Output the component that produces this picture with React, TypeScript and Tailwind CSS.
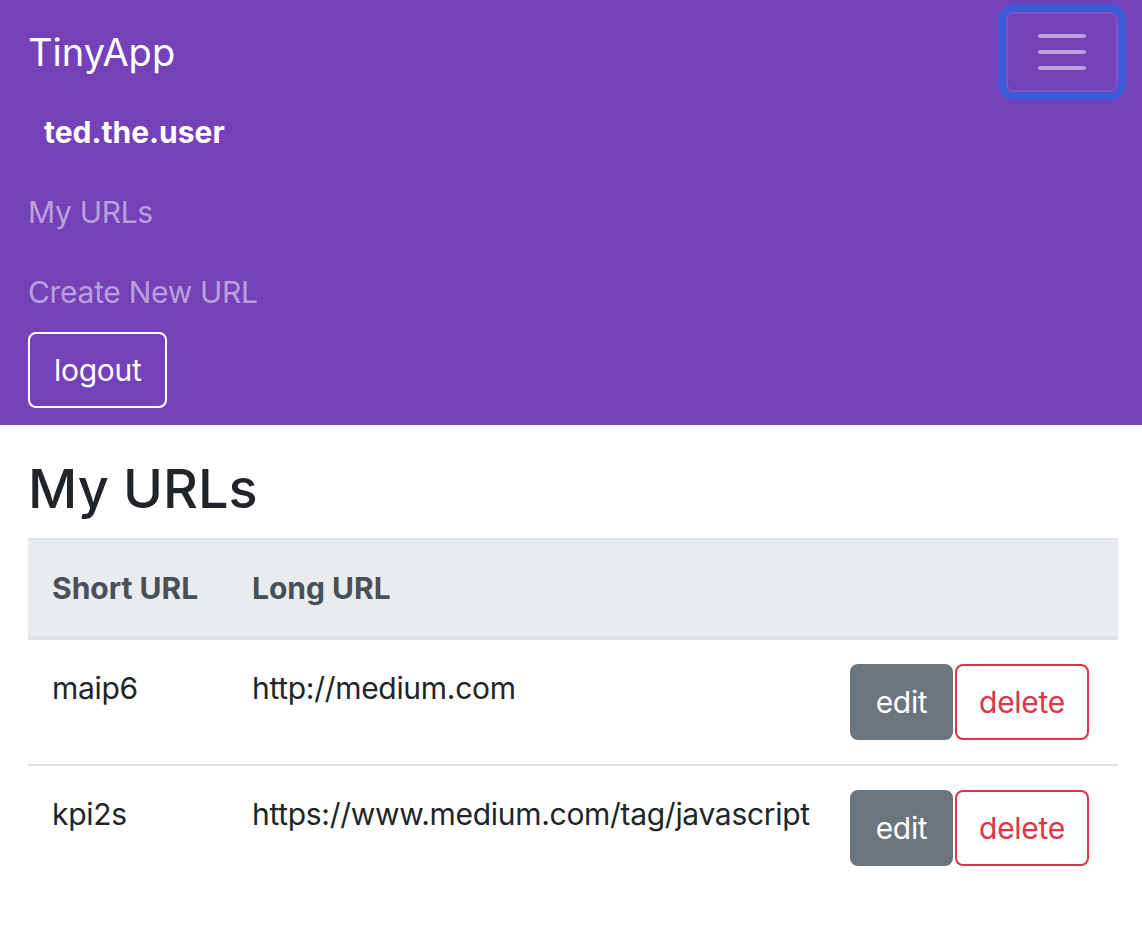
const urls = [
  { short: "maip6", long: "http://medium.com" },
  { short: "kpi2s", long: "https://www.medium.com/tag/javascript" },
];

function Hamburger() {
  return (
    <svg width="60" height="60" viewBox="0 0 30 30">
      <path
        d="M4 7h22M4 15h22M4 23h22"
        stroke="rgba(255,255,255,0.5)"
        strokeWidth={2}
        strokeLinecap="round"
      />
    </svg>
  );
}

export default function App() {
  return (
    <div className="min-h-screen bg-white text-[#212529] font-['Inter','Noto_Sans',sans-serif] text-[30px] leading-[48px] tracking-[-0.3px]">
      {/* navbar */}
      <nav className="bg-[#7441b8] px-[28px] pt-3 pb-[17px]">
        <div className="flex items-center justify-between h-20">
          <span className="text-white text-[38px] leading-[60px] tracking-normal">TinyApp</span>
          <button className="flex items-center justify-center w-[112px] h-20 border-2 border-white/10 rounded-lg mr-[-4px] shadow-[0_0_0_8px_#3d5bd9]">
            <Hamburger />
          </button>
        </div>
        <div className="flex flex-col">
          <div className="h-20 flex items-center pl-4 text-white font-bold tracking-normal">ted.the.user</div>
          <a className="h-20 flex items-center text-white/50">My URLs</a>
          <a className="h-20 flex items-center text-white/50">Create New URL</a>
          <div>
            <button className="border-2 border-white text-white rounded-lg px-6 py-3 leading-[48px]">
              logout
            </button>
          </div>
        </div>
      </nav>

      {/* content */}
      <main className="pl-[28px] pr-6 pt-[33px]">
        <h2 className="text-[54px] leading-[62px] font-medium mb-[18px] tracking-normal">My URLs</h2>
        <div className="w-full">
          <div className="flex bg-[#e9ecef] text-[#495057] font-bold tracking-normal border-t-2 border-b-4 border-[#dee2e6] whitespace-nowrap">
            <div className="w-[200px] shrink-0 p-6">Short URL</div>
            <div className="flex-1 p-6">Long URL</div>
          </div>
          {urls.map((u, i) => (
            <div
              key={u.short}
              className={
                "flex items-start whitespace-nowrap " + (i > 0 ? "border-t-2 border-[#dee2e6]" : "")
              }
            >
              <div className="w-[200px] shrink-0 p-6">{u.short}</div>
              <div className="flex-1 min-w-0 p-6">{u.long}</div>
              <div className="w-[292px] shrink-0 flex gap-[2px] pl-6 py-6">
                <button className="w-[103px] bg-[#6c757d] text-white rounded-lg py-3 border-2 border-[#6c757d]">
                  edit
                </button>
                <button className="w-[134px] bg-white text-[#dc3545] rounded-lg py-3 border-2 border-[#dc3545]">
                  delete
                </button>
              </div>
            </div>
          ))}
        </div>
      </main>
    </div>
  );
}
